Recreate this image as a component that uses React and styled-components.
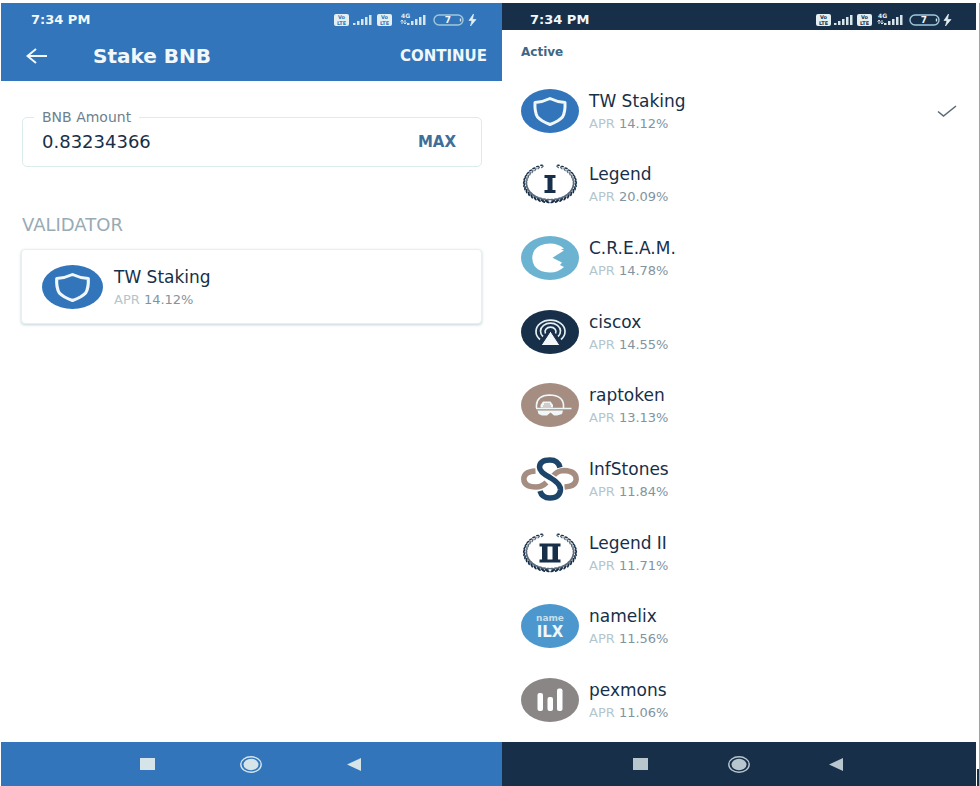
import React, { useState } from "react";
import styled, { createGlobalStyle } from "styled-components";

const BLUE = "#3275bb";
const NAVY = "#172f49";
const SKY = "#6cb3d2";
const TAUPE = "#a68d81";

const GlobalStyle = createGlobalStyle`
  *, *::before, *::after { box-sizing: border-box; }
  body {
    margin: 0;
    background: #fff;
    color: ${NAVY};
    font-family: "DejaVu Sans", Verdana, sans-serif;
  }
  button, input { font: inherit; color: inherit; }
`;

const Page = styled.div`
  display: grid;
  grid-template-columns: minmax(0, 501fr) minmax(0, 474fr) 4px;
  min-height: 100vh;
  padding: 3px 0 0 1px;
`;

const Screen = styled.section`
  display: flex;
  flex-direction: column;
  min-width: 0;
`;

const StatusBar = styled.div`
  display: flex;
  align-items: center;
  justify-content: space-between;
  height: ${(p) => (p.$tall ? 33 : 27)}px;
  padding: ${(p) => (p.$tall ? "0 25px 0 30px" : "6px 24px 0 28px")};
  background: ${(p) => p.$tone};
  color: #f2f8fa;
`;

const Clock = styled.time`
  font-size: 13px;
  line-height: 16px;
  font-weight: 700;
`;

const AppBar = styled.header`
  display: flex;
  align-items: center;
  height: 45px;
  padding: 0 15px 5px 21px;
  background: ${BLUE};
  color: #f2f8fa;
`;

const IconButton = styled.button`
  display: flex;
  padding: 4px;
  border: 0;
  background: none;
  cursor: pointer;
`;

const Title = styled.h1`
  flex: 1;
  margin: 0 0 0 42px;
  font-size: 20px;
  line-height: 28px;
  font-weight: 700;
`;

const TextButton = styled.button`
  padding: 0;
  border: 0;
  background: none;
  color: ${(p) => p.$tone};
  font-size: 15px;
  line-height: 20px;
  font-weight: 700;
  cursor: pointer;
`;

const StakeForm = styled.main`
  flex: 1;
  padding: 28px 20px 24px;
`;

const AmountField = styled.fieldset`
  display: flex;
  align-items: center;
  min-width: 0;
  height: 58px;
  margin: 0 0 0 1px;
  padding: 0 25px 8px 19px;
  border: 1px solid #dcebec;
  border-radius: 5px;
`;

const AmountLegend = styled.legend`
  margin-left: -8px;
  padding: 0 8px;
  color: #6f7f8c;
  font-size: 14px;
  line-height: 16px;
`;

const AmountInput = styled.input`
  flex: 1;
  min-width: 0;
  padding: 0;
  border: 0;
  outline: 0;
  background: none;
  font-size: 18px;
  line-height: 24px;
`;

const SectionTitle = styled.h2`
  margin: 48px 0 14px 1px;
  color: #98abb5;
  font-size: 18px;
  line-height: 20px;
  font-weight: 400;
`;

const ValidatorCard = styled.button`
  display: flex;
  align-items: center;
  gap: 11px;
  width: 100%;
  height: 75px;
  padding: 0 20px;
  border: 1px solid #e6f0f1;
  border-radius: 4px;
  background: #fff;
  box-shadow: 0 1px 3px #c3d5da;
  text-align: left;
  cursor: pointer;
`;

const ListHeading = styled.h2`
  height: 44px;
  margin: 0;
  padding: 14px 19px 0;
  color: #3f6684;
  font-size: 12px;
  line-height: 16px;
  font-weight: 700;
`;

const ValidatorList = styled.ul`
  display: grid;
  flex: 1;
  grid-auto-rows: minmax(60px, 1fr);
  margin: 0;
  padding: 0 0 5px;
  list-style: none;
`;

const ValidatorRow = styled.button`
  display: flex;
  align-items: center;
  gap: 10px;
  width: 100%;
  height: 100%;
  padding: 0 19px;
  border: 0;
  background: none;
  text-align: left;
  cursor: pointer;
`;

const Avatar = styled.svg`
  flex: none;
  width: ${(p) => (p.$wide ? 61 : 58)}px;
  height: 44px;
`;

const Info = styled.span`
  display: flex;
  flex: 1;
  flex-direction: column;
  gap: 4px;
  min-width: 0;
  padding-top: 2px;
`;

const Name = styled.span`
  font-size: 17px;
  line-height: 20px;
`;

const Apr = styled.span`
  color: #b4c6cd;
  font-size: 13px;
  line-height: 18px;
`;

const Rate = styled.span`
  color: #8294a0;
`;

const NavBar = styled.nav`
  display: flex;
  align-items: center;
  justify-content: space-between;
  height: 44px;
  padding: 0 ${(p) => p.$right}px 0 ${(p) => p.$left}px;
  background: ${(p) => p.$tone};
  color: ${(p) => p.$ink};
`;

const Edge = styled.div`
  display: flex;
  align-items: flex-end;
  margin-left: 1px;
  border-right: 1px solid #a3a3a5;
  &::after {
    content: "";
    width: 2px;
    height: 17px;
    background: ${NAVY};
  }
`;

function Volte({ x, tone }) {
  return (
    <g transform={`translate(${x} 0)`}>
      <rect x="0" y="2" width="15" height="12" rx="2" fill="#e4eff2" />
      <text x="7.5" y="7" textAnchor="middle" fontSize="5" fontWeight="700" fill={tone}>Vo</text>
      <text x="7.5" y="13" textAnchor="middle" fontSize="5" fontWeight="700" fill={tone}>LTE</text>
    </g>
  );
}

function Bars({ x }) {
  return [0, 1, 2, 3, 4].map((i) => (
    <rect key={i} x={x + i * 4} y={11 - i * 2} width="2.500" height={2 + i * 2} fill="#d5e5ea" />
  ));
}

const ROOMY = { width: 143, bars: 19, volte: 43, data: 67, dataBars: 73, battery: 99, bolt: 134 };
const COMPACT = { width: 136, bars: 18, volte: 41, data: 62, dataBars: 68, battery: 93, bolt: 127 };

function StatusIcons({ tone, compact }) {
  const at = compact ? COMPACT : ROOMY;
  return (
    <svg width={at.width} height="16" role="img" aria-label="Signal and battery">
      <Volte x={0} tone={tone} />
      <Bars x={at.bars} />
      <Volte x={at.volte} tone={tone} />
      <g transform={`translate(${at.data} 0)`}>
        <text x="0" y="6" fontSize="6" fontWeight="700" fill="#e4eff2">4G</text>
        <path d="M1 12V8m-1.500 1.500L1 8l1.500 1.500M4 8v4m-1.500-1.500L4 12l1.500-1.500" fill="none" stroke="#d5e5ea" strokeWidth="1" />
      </g>
      <Bars x={at.dataBars} />
      <g transform={`translate(${at.battery} 0)`}>
        <rect x="1" y="3" width="29" height="10" rx="5" fill="none" stroke="#9fc9dc" strokeWidth="1.400" />
        <path d="M27.500 6.500v3" stroke="#d5e5ea" strokeWidth="1.400" />
        <text x="15" y="11.300" textAnchor="middle" fontSize="9" fontWeight="700" fill="#f2f8fa">7</text>
      </g>
      <path transform={`translate(${at.bolt} 0)`} d="M5.500 2L1 8.500h3L2.500 14L8 7.500H4.500Z" fill="#e4eff2" stroke="#e4eff2" strokeWidth="0.700" />
    </svg>
  );
}

function Disc({ fill }) {
  return <ellipse cx="29" cy="22" rx="29" ry="22" fill={fill} />;
}

function Shield() {
  return (
    <>
      <Disc fill={BLUE} />
      <path d="M29 9.500Q36 13 44 13.500Q44.500 23 41.500 28Q38 32 29 35.500Q20 32 16.500 28Q13.500 23 14 13.500Q22 13 29 9.500Z" fill="none" stroke="#f0f7f9" strokeWidth="3" strokeLinejoin="round" />
    </>
  );
}

function Laurel({ double }) {
  const steps = Array.from({ length: 17 }, (_, i) => 96 + i * 9.7);
  return (
    <>
      {[1, -1].map((side) => (
        <g key={side} transform={side === 1 ? undefined : "translate(58 0) scale(-1 1)"}>
          {steps.map((deg, i) => {
            const a = (deg * Math.PI) / 180;
            const size = 1.35 - i * 0.03;
            return [0, 1].map((k) => (
              <ellipse
                key={`${i}-${k}`}
                rx={2 * size}
                ry={0.8 * size}
                fill={k ? NAVY : "#5b6b7b"}
                transform={`translate(${29 + (k ? 26 : 23.6) * Math.cos(a)} ${21 + (k ? 18.8 : 17) * Math.sin(a)}) rotate(${deg + (k ? 110 : 72)})`}
              />
            ));
          })}
        </g>
      ))}
      <path
        d={double
          ? "M18.500 12.500H39.500V15.500H37V28.500H39.500V31.500H18.500V28.500H21V15.500H18.500ZM26.500 15.500V28.500H31.500V15.500Z"
          : "M23.500 13H34.500V16H31.500V28H34.500V31H23.500V28H26.500V16H23.500Z"}
        fill={NAVY}
        fillRule="evenodd"
      />
    </>
  );
}

function Cream() {
  return (
    <>
      <Disc fill={SKY} />
      <path d="M43 12.500Q37 7.500 29 7.500Q18.500 7.500 13.500 14Q9 22 13.500 30Q18.500 36.500 29 36.500Q37 36.500 43 31L39 29L41 26.500L31.500 21.700L43 14.500L40 13.500Z" fill="#fff" />
    </>
  );
}

function Beacon() {
  return (
    <>
      <Disc fill={NAVY} />
      <g fill="none" stroke="#e4eff2" strokeWidth="1.700">
        <path d="M19 29.500A14.500 11.500 0 1 1 40 29.500" />
        <path d="M22 26.500A10 8 0 1 1 37 26.500" />
        <path d="M24.500 23.500A5.500 4.500 0 1 1 34.500 23.500" />
      </g>
      <path d="M29.500 21L39 35.500H20Z" fill="#f2f8fa" stroke={NAVY} strokeWidth="1" />
    </>
  );
}

function Cap() {
  return (
    <>
      <Disc fill={TAUPE} />
      <path d="M15.500 25V22Q16 12.500 28.500 12Q42 12.500 42.500 22V25" fill="none" stroke="#f0f7f9" strokeWidth="1.600" />
      <path d="M15 25.500H50.500" stroke="#f0f7f9" strokeWidth="1.600" />
      <path d="M19.500 24.500V22L22 18.500H29.500L32 22V24.500Z" fill="#f0f7f9" />
      <path d="M23 21H29M22 23H30" stroke={TAUPE} strokeWidth="0.800" />
      <path d="M16.500 27.500H42L41 31L36 32.500H33L29.500 29.500L26 32.500H21L17.500 31Z" fill="#f0f7f9" />
    </>
  );
}

function Knot() {
  const strand = "M39 10.500Q37 3 29 3Q19 3 18.500 10Q18.500 15 29 20.500Q40 27 39.500 33Q38.500 41 29 41Q21 41 19 34";
  return (
    <g fill="none" strokeWidth="5.500">
      <path d="M14.500 14Q3 14.500 2.800 22Q3 30 15 30Q21 30 25.500 25.500M32 19Q36.500 13.500 43 13.500Q55 14 55.200 22Q55 29.500 43.500 30" stroke={TAUPE} />
      <path d={strand} stroke="#fff" strokeWidth="8" />
      <path d={strand} stroke="#1d4469" />
    </g>
  );
}

function Namelix() {
  return (
    <>
      <Disc fill="#4b97ce" />
      <text x="29" y="17" textAnchor="middle" fontSize="9" fontWeight="700" fill="#c5dfeb">name</text>
      <text x="29" y="33" textAnchor="middle" fontSize="15" fontWeight="700" fill="#f0f7f9">ILX</text>
    </>
  );
}

function Chart() {
  return (
    <>
      <Disc fill="#8b8686" />
      <g fill="#fff">
        <rect x="16.500" y="15" width="5.500" height="18" rx="2" />
        <rect x="26.500" y="19" width="5.500" height="14" rx="2" />
        <rect x="36" y="10.500" width="5.500" height="22.500" rx="2" />
      </g>
    </>
  );
}

const VALIDATORS = [
  { name: "TW Staking", rate: "14.12%", logo: <Shield /> },
  { name: "Legend", rate: "20.09%", logo: <Laurel /> },
  { name: "C.R.E.A.M.", rate: "14.78%", logo: <Cream /> },
  { name: "ciscox", rate: "14.55%", logo: <Beacon /> },
  { name: "raptoken", rate: "13.13%", logo: <Cap /> },
  { name: "InfStones", rate: "11.84%", logo: <Knot /> },
  { name: "Legend II", rate: "11.71%", logo: <Laurel double /> },
  { name: "namelix", rate: "11.56%", logo: <Namelix /> },
  { name: "pexmons", rate: "11.06%", logo: <Chart /> },
];

function Validator({ item, wide }) {
  return (
    <>
      <Avatar $wide={wide} viewBox="0 0 58 44" preserveAspectRatio="none" aria-hidden="true">
        {item.logo}
      </Avatar>
      <Info>
        <Name>{item.name}</Name>
        <Apr>APR <Rate>{item.rate}</Rate></Apr>
      </Info>
    </>
  );
}

function SystemNav(props) {
  return (
    <NavBar aria-label="System" {...props}>
      <IconButton aria-label="Recent apps">
        <svg width="15" height="12"><rect width="15" height="12" fill="currentColor" /></svg>
      </IconButton>
      <IconButton aria-label="Home">
        <svg width="22" height="17" viewBox="0 0 22 17">
          <ellipse cx="11" cy="8.500" rx="10.200" ry="7.700" fill="none" stroke="currentColor" strokeWidth="1.400" />
          <ellipse cx="11" cy="8.500" rx="7.500" ry="5.700" fill="currentColor" />
        </svg>
      </IconButton>
      <IconButton aria-label="Back">
        <svg width="14" height="13"><path d="M0 6.500L14 0V13Z" fill="currentColor" /></svg>
      </IconButton>
    </NavBar>
  );
}

export default function App() {
  const [selected, setSelected] = useState(0);
  const [amount, setAmount] = useState("0.83234366");

  return (
    <>
      <GlobalStyle />
      <Page>
        <Screen>
          <StatusBar $tall $tone={BLUE}>
            <Clock>7:34 PM</Clock>
            <StatusIcons tone={BLUE} />
          </StatusBar>
          <AppBar>
            <IconButton aria-label="Go back">
              <svg width="21" height="16" viewBox="0 0 21 16" fill="none" stroke="currentColor" strokeWidth="2">
                <path d="M1.500 8H21M10 1L1.500 8L10 15" />
              </svg>
            </IconButton>
            <Title>Stake BNB</Title>
            <TextButton $tone="#f2f8fa">CONTINUE</TextButton>
          </AppBar>
          <StakeForm>
            <AmountField>
              <AmountLegend><label htmlFor="amount">BNB Amount</label></AmountLegend>
              <AmountInput id="amount" value={amount} onChange={(e) => setAmount(e.target.value)} />
              <TextButton $tone="#3f6f98" onClick={() => setAmount("0.83234366")}>MAX</TextButton>
            </AmountField>
            <SectionTitle>VALIDATOR</SectionTitle>
            <ValidatorCard>
              <Validator item={VALIDATORS[selected]} wide />
            </ValidatorCard>
          </StakeForm>
          <SystemNav $tone={BLUE} $ink="#d5e4e9" $left={135} $right={137} />
        </Screen>
        <Screen>
          <StatusBar $tone={NAVY}>
            <Clock>7:34 PM</Clock>
            <StatusIcons tone={NAVY} compact />
          </StatusBar>
          <ListHeading>Active</ListHeading>
          <ValidatorList>
            {VALIDATORS.map((item, i) => (
              <li key={item.name}>
                <ValidatorRow aria-pressed={i === selected} onClick={() => setSelected(i)}>
                  <Validator item={item} />
                  {i === selected && (
                    <svg width="20" height="14" viewBox="0 0 20 14" fill="none" stroke="#596a78" strokeWidth="1.600" aria-hidden="true">
                      <path d="M1 7.500L6.500 12L19 2" />
                    </svg>
                  )}
                </ValidatorRow>
              </li>
            ))}
          </ValidatorList>
          <SystemNav $tone={NAVY} $ink="#b8c6ce" $left={127} $right={129} />
        </Screen>
        <Edge />
      </Page>
    </>
  );
}
